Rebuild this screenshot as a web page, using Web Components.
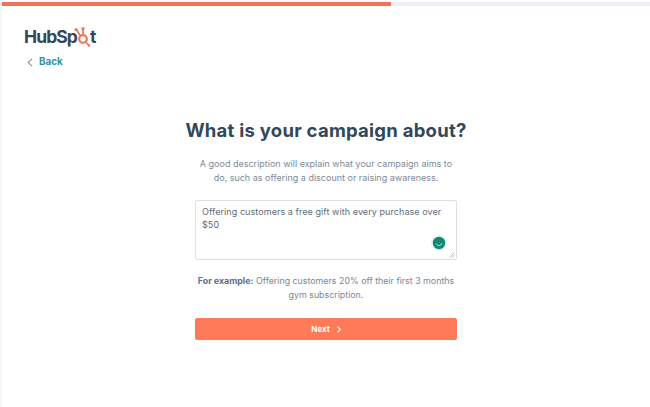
<!DOCTYPE html>
<html lang="en">
<head>
<meta charset="utf-8">
<title>What is your campaign about?</title>
<style>
html, body { margin: 0; height: 100%; background: #fff; }
body { font-family: Inter, "Noto Sans", sans-serif; color: #33475b; overflow: hidden; }
</style>
</head>
<body>
<campaign-page>
  <progress-bar slot="top" value="60"></progress-bar>
  <page-header slot="top"></page-header>
  <h-title>What is your campaign about?</h-title>
  <help-text style="--top:15px">A good description will explain what your campaign aims to<br>do, such as offering a discount or raising awareness.</help-text>
  <desc-box>Offering customers a free gift with every purchase over $50</desc-box>
  <help-text class="example" style="--top:14px;--color:#7a8796;--size:8.85px"><b style="color:#5b7189;font-weight:700">For example:</b> Offering customers 20% off their first 3 months<br>gym subscription.</help-text>
  <next-button>Next</next-button>
</campaign-page>

<script>
class CampaignPage extends HTMLElement {
  constructor() {
    super();
    this.attachShadow({ mode: "open" });
    this.shadowRoot.innerHTML = `
      <style>
        :host { display: block; height: 407px; box-sizing: border-box; border-left: 2px solid #f6f6f7; }
        main { width: 262px; margin: 0 auto; display: flex; flex-direction: column; padding-top: 37px; }
      </style>
      <slot name="top"></slot>
      <main><slot></slot></main>`;
  }
}

class ProgressBar extends HTMLElement {
  constructor() {
    super();
    this.attachShadow({ mode: "open" });
    this.shadowRoot.innerHTML = `
      <style>
        :host { display: block; height: 4px; margin: 2px 0 0 0; background: #eef0f5; }
        div { height: 100%; background: #f0745a; }
      </style>
      <div></div>`;
  }
  connectedCallback() {
    this.shadowRoot.querySelector("div").style.width = this.getAttribute("value") + "%";
  }
}

class PageHeader extends HTMLElement {
  constructor() {
    super();
    this.attachShadow({ mode: "open" });
    this.shadowRoot.innerHTML = `
      <style>
        :host { display: block; padding: 19px 0 0 22px; height: 56px; box-sizing: content-box; }
        .logo { display: flex; align-items: center; height: 24px; color: #33475b; font: 700 17.5px/24px "Inter", sans-serif; letter-spacing: -0.9px; }
        .logo svg { width: 20px; height: 22px; margin: -1px -3px 0 -4px; flex: none; }
        .back { display: flex; align-items: center; gap: 6px; margin: 6px 0 0 3px; color: #2f93a6; font: 700 9.8px/14px "Inter", sans-serif; }
        .back svg { width: 6px; height: 9px; }
      </style>
      <div class="logo">
        <span>HubSp</span>
        <svg viewBox="0 0 20 22" fill="none" stroke="#f0785c" stroke-linecap="round">
          <circle cx="10" cy="13" r="3.8" stroke-width="2.2"/>
          <path d="M10 9V3.5M3.5 4l4 6" stroke-width="1.8"/>
          <path d="M13 16.5l2.5 2.5" stroke-width="1.6"/>
          <circle cx="10" cy="2.6" r="1.7" fill="#f0785c" stroke="none"/>
          <circle cx="3" cy="3.5" r="1.6" fill="#f0785c" stroke="none"/>
          <circle cx="16" cy="19.5" r="1.2" fill="#f0785c" stroke="none"/>
        </svg>
        <span>t</span>
      </div>
      <div class="back">
        <svg viewBox="0 0 6 9" fill="none" stroke="#7c98b0" stroke-width="1.1"><path d="M5 .8 1.2 4.5 5 8.2"/></svg>
        <span>Back</span>
      </div>`;
  }
}

class HTitle extends HTMLElement {
  constructor() {
    super();
    this.attachShadow({ mode: "open" });
    this.shadowRoot.innerHTML = `
      <style>
        :host { display: block; margin: 0 -20px; text-align: center; white-space: nowrap; font: 700 18.5px/24px Inter, sans-serif; color: #33475b; letter-spacing: .25px; }
      </style>
      <slot></slot>`;
  }
}

class HelpText extends HTMLElement {
  constructor() {
    super();
    this.attachShadow({ mode: "open" });
    this.shadowRoot.innerHTML = `
      <style>
        :host { display: block; margin-top: var(--top, 14px); text-align: center; white-space: nowrap; font: 400 var(--size, 9px)/14px Inter, sans-serif; color: var(--color, #7d8a98); }
      </style>
      <slot></slot>`;
  }
}

class DescBox extends HTMLElement {
  constructor() {
    super();
    this.attachShadow({ mode: "open" });
    this.shadowRoot.innerHTML = `
      <style>
        :host { display: block; position: relative; box-sizing: border-box; height: 60px; margin-top: 15px; padding: 4px 6px; border: 1px solid #d9e0e6; border-radius: 2px; font: 400 9px/13px Inter, sans-serif; letter-spacing: .07px; color: #5f6b78; background: #fff; }
        .spin { position: absolute; right: 9px; bottom: 8px; width: 16px; height: 16px; }
        .grip { position: absolute; right: 1px; bottom: 1px; width: 6px; height: 6px; }
      </style>
      <slot></slot>
      <svg class="spin" viewBox="0 0 16 16" fill="none">
        <circle cx="8" cy="8" r="8" fill="#e6f3f1"/>
        <circle cx="8" cy="8" r="6.2" fill="#0f8a70"/>
        <path d="M4.9 8.6A3.2 3.2 0 0 0 11 8" stroke="#a8dccb" stroke-width="1"/>
      </svg>
      <svg class="grip" viewBox="0 0 6 6" stroke="#9aa5ae" stroke-width=".8"><path d="M.5 5.5 5.5.5M3 5.5 5.5 3"/></svg>`;
  }
}

class NextButton extends HTMLElement {
  constructor() {
    super();
    this.attachShadow({ mode: "open" });
    this.shadowRoot.innerHTML = `
      <style>
        :host { display: flex; align-items: center; justify-content: center; gap: 7px; height: 22px; margin-top: 16px; border-radius: 2px; background: #ff7a59; color: #fff; font: 700 8px/22px Inter, sans-serif; }
        svg { width: 4px; height: 7px; }
      </style>
      <slot></slot>
      <svg viewBox="0 0 4 7" fill="none" stroke="#fff" stroke-width="1.2"><path d="M.6.6 3.4 3.5.6 6.4"/></svg>`;
  }
}

customElements.define("campaign-page", CampaignPage);
customElements.define("progress-bar", ProgressBar);
customElements.define("page-header", PageHeader);
customElements.define("h-title", HTitle);
customElements.define("help-text", HelpText);
customElements.define("desc-box", DescBox);
customElements.define("next-button", NextButton);
</script>
</body>
</html>
